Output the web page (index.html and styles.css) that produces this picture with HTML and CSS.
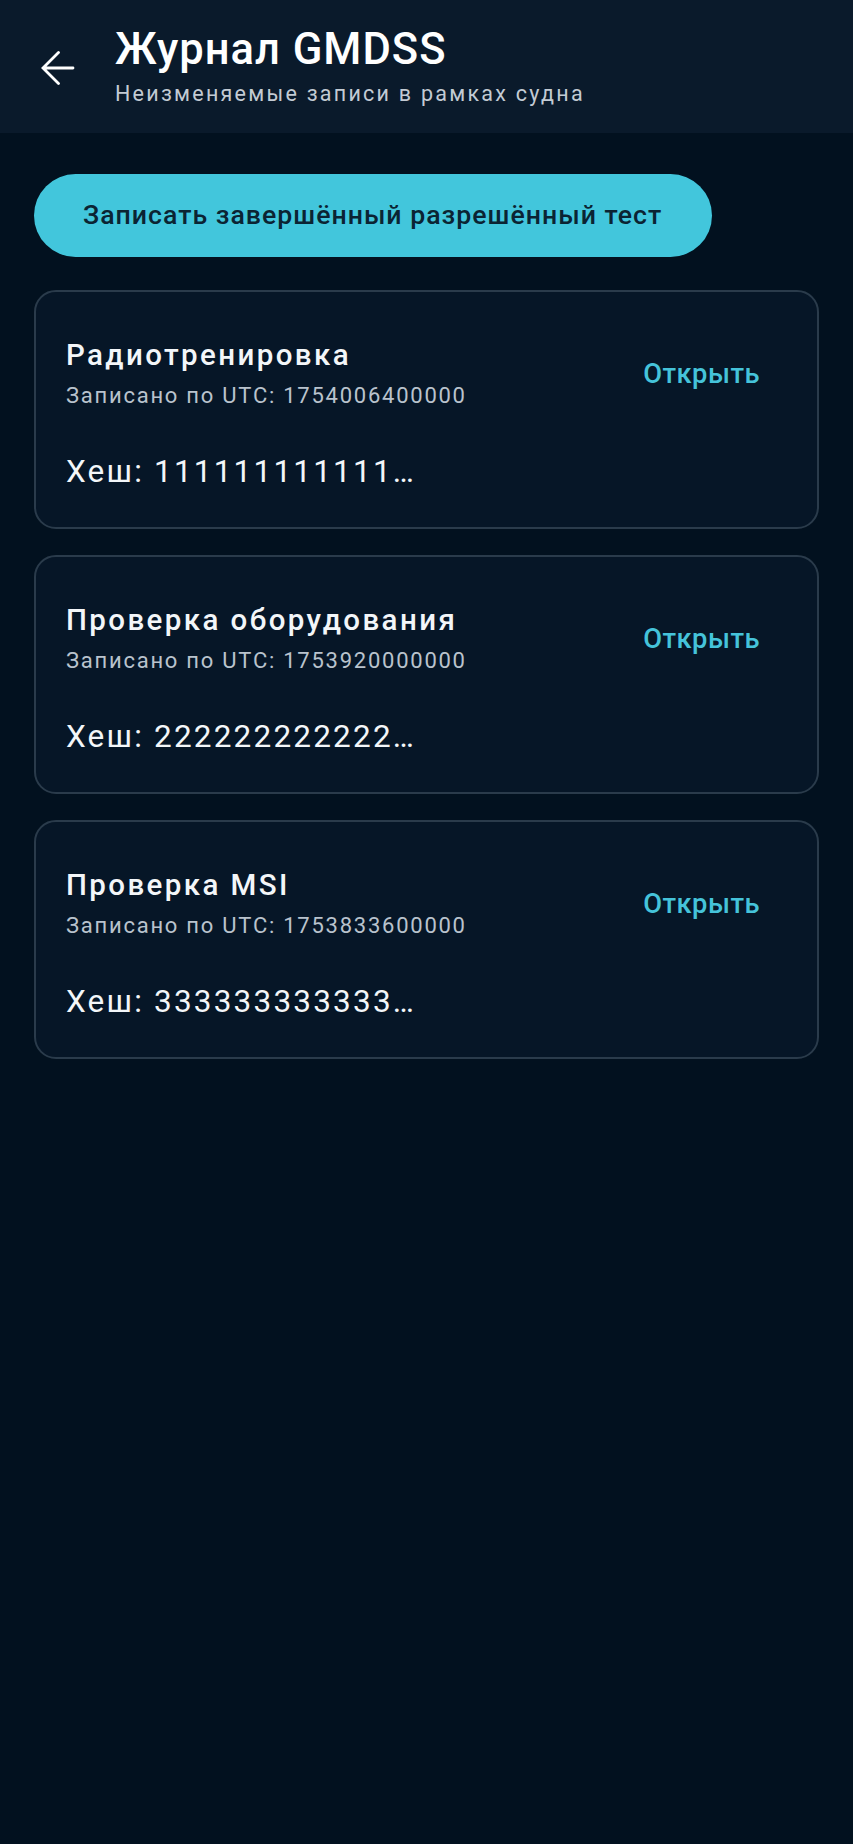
FILE: index.html
```html
<!DOCTYPE html>
<html lang="ru">
<head>
<meta charset="utf-8">
<title>Журнал GMDSS</title>
<link rel="stylesheet" href="styles.css">
</head>
<body>
<header class="topbar">
  <button class="back" aria-label="Назад">
    <svg viewBox="0 0 34 34" width="34" height="34"><path d="M32 17H2.5M17.5 1.5L2 17l15.5 15.5" fill="none" stroke="#ffffff" stroke-width="2.8" stroke-linecap="round" stroke-linejoin="miter"/></svg>
  </button>
  <div class="titles">
    <h1 class="title">Журнал GMDSS</h1>
    <p class="subtitle">Неизменяемые записи в рамках судна</p>
  </div>
</header>
<main class="content">
  <button class="primary">Записать завершённый разрешённый тест</button>
  <ul class="list">
    <li class="card">
      <div class="row">
        <div class="info">
          <div class="name">Радиотренировка</div>
          <div class="meta">Записано по UTC: 1754006400000</div>
        </div>
        <button class="open">Открыть</button>
      </div>
      <div class="hash">Хеш: 111111111111…</div>
    </li>
    <li class="card">
      <div class="row">
        <div class="info">
          <div class="name">Проверка оборудования</div>
          <div class="meta">Записано по UTC: 1753920000000</div>
        </div>
        <button class="open">Открыть</button>
      </div>
      <div class="hash">Хеш: 222222222222…</div>
    </li>
    <li class="card">
      <div class="row">
        <div class="info">
          <div class="name">Проверка MSI</div>
          <div class="meta">Записано по UTC: 1753833600000</div>
        </div>
        <button class="open">Открыть</button>
      </div>
      <div class="hash">Хеш: 333333333333…</div>
    </li>
  </ul>
</main>
</body>
</html>
```
FILE: styles.css
```css
* { box-sizing: border-box; }
html, body { margin: 0; padding: 0; }
body {
  background: #02111f;
  font-family: Roboto, "Noto Sans", "Liberation Sans", sans-serif;
  color: #eef2f6;
  min-height: 1844px;
}
.topbar {
  height: 133px;
  background: #0a1a2b;
  display: flex;
  align-items: flex-start;
  padding: 25px 0 0 41px;
}
.back {
  background: none;
  border: 0;
  padding: 0;
  width: 34px;
  height: 34px;
  margin-top: 25.5px;
  display: flex;
}
.titles { margin-left: 40px; }
.title {
  margin: 0;
  font-size: 43.5px;
  line-height: 50px;
  font-weight: 500;
  letter-spacing: 1px;
  color: #ffffff;
}
.subtitle {
  margin: 4.5px 0 0;
  font-size: 21.5px;
  line-height: 28px;
  letter-spacing: 2.25px;
  color: #c3cbd4;
}
.content {
  padding: 41px 34px 0;
}
.primary {
  display: block;
  height: 83px;
  padding: 0 50px 2px 49px;
  border: 0;
  border-radius: 42px;
  background: #42c6dc;
  color: #0b2433;
  font-family: inherit;
  font-size: 26.7px;
  font-weight: 500;
  letter-spacing: 1px;
}
.list {
  list-style: none;
  margin: 33px 0 0;
  padding: 0;
  display: flex;
  flex-direction: column;
  gap: 26px;
}
.card {
  background: #061627;
  border: 2px solid #2a3b4b;
  border-radius: 22px;
  padding: 31px 30px 35px;
}
.row {
  display: flex;
  align-items: center;
  justify-content: space-between;
  min-height: 102px;
}
.name {
  font-size: 29.5px;
  line-height: 36px;
  font-weight: 500;
  letter-spacing: 2.4px;
  color: #f3f6f9;
}
.meta {
  margin-top: 8.5px;
  font-size: 22px;
  line-height: 30px;
  letter-spacing: 1.75px;
  color: #b9c3cd;
}
.open {
  background: none;
  border: 0;
  padding: 0 27px;
  height: 85px;
  font-family: inherit;
  font-size: 27.3px;
  font-weight: 500;
  letter-spacing: 0.5px;
  color: #45c3da;
}
.hash {
  margin-top: 27px;
  font-size: 31.5px;
  line-height: 40px;
  letter-spacing: 2.2px;
  color: #f3f6f9;
}
```
